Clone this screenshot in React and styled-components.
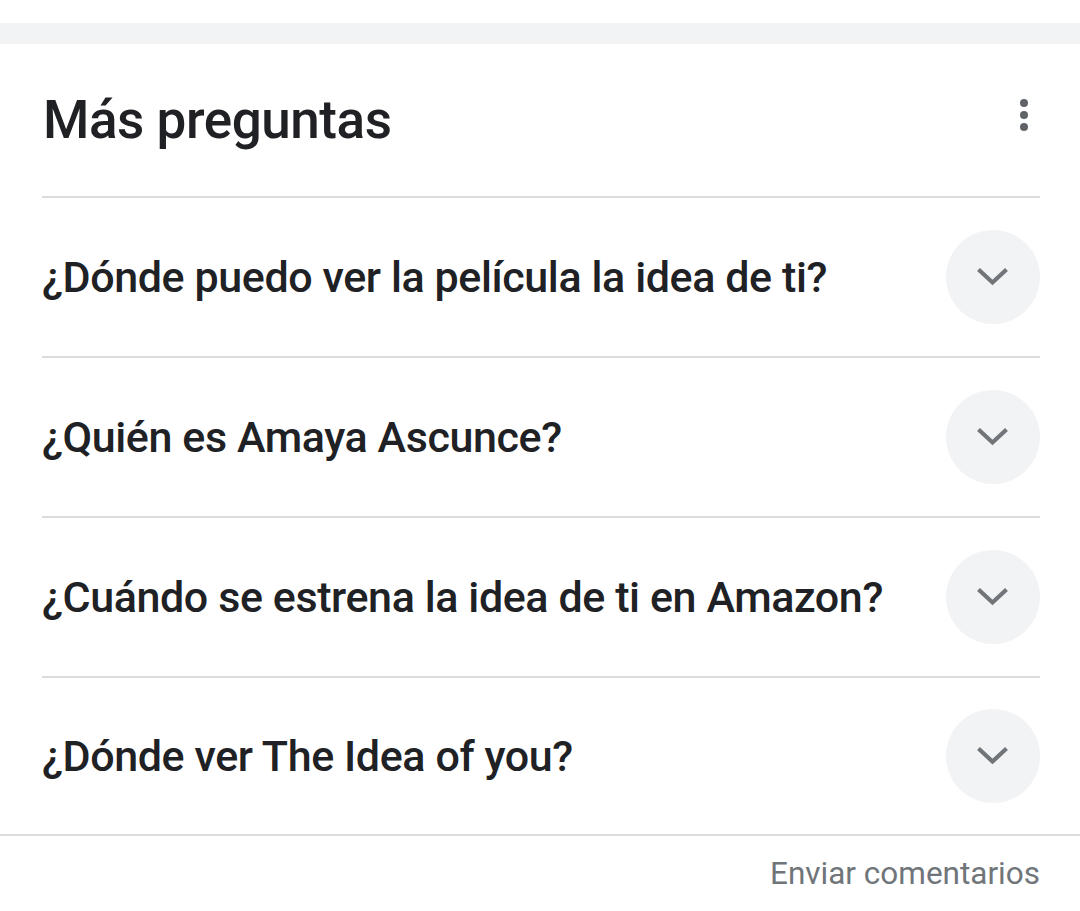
import React from "react";
import styled, { createGlobalStyle } from "styled-components";

const Global = createGlobalStyle`
  html, body { margin: 0; padding: 0; background: #fff; }
  body { font-family: Roboto, "Noto Sans", Arial, sans-serif; color: #202124; }
`;

const Page = styled.div`
  width: 1080px;
  background: #fff;
  padding-top: 23px;
`;

const Band = styled.div`
  height: 21px;
  background: #f1f3f4;
`;

const Card = styled.section`
  background: #fff;
`;

const Inner = styled.div`
  padding: 0 40px 0 42px;
`;

const Header = styled.div`
  height: 152px;
  display: flex;
  align-items: center;
  justify-content: space-between;
  border-bottom: 2px solid #dadce0;
`;

const Title = styled.h2`
  margin: 0;
  font-size: 53px;
  line-height: 62px;
  font-weight: 500;
  letter-spacing: -0.45px;
  color: #202124;
  margin-left: 1px;
`;

const IconButton = styled.button`
  width: 48px;
  height: 48px;
  border: 0;
  padding: 0;
  background: transparent;
  margin-right: -8px;
  margin-top: -10px;
  display: flex;
  align-items: center;
  justify-content: center;
`;

const Row = styled.div`
  height: ${(p) => p.$h}px;
  display: flex;
  align-items: center;
  justify-content: space-between;
  border-bottom: ${(p) => (p.$last ? "none" : "2px solid #dadce0")};
`;

const Question = styled.div`
  font-size: 43px;
  line-height: 50px;
  font-weight: 500;
  letter-spacing: -0.4px;
  color: #202124;
`;

const Circle = styled.div`
  width: 94px;
  height: 94px;
  border-radius: 50%;
  background: #f1f3f4;
  display: flex;
  align-items: center;
  justify-content: center;
  flex-shrink: 0;
`;

const Footer = styled.div`
  border-top: 2px solid #dadce0;
  height: 75px;
  display: flex;
  align-items: center;
  justify-content: flex-end;
  padding-right: 40px;
`;

const FeedbackLink = styled.span`
  font-size: 31.5px;
  line-height: 40px;
  color: #70757a;
`;

const MoreVert = () => (
  <svg width="48" height="48" viewBox="0 0 24 24" fill="#5f6368">
    <circle cx="12" cy="6" r="2" />
    <circle cx="12" cy="12" r="2" />
    <circle cx="12" cy="18" r="2" />
  </svg>
);

const Chevron = () => (
  <svg width="36" height="24" viewBox="0 0 36 24" fill="none">
    <polyline
      points="3.5,4.5 17.5,17.5 31.5,4.5"
      stroke="#70757a"
      strokeWidth="4.2"
      strokeLinecap="butt"
      strokeLinejoin="miter"
    />
  </svg>
);

const questions = [
  "¿Dónde puedo ver la película la idea de ti?",
  "¿Quién es Amaya Ascunce?",
  "¿Cuándo se estrena la idea de ti en Amazon?",
  "¿Dónde ver The Idea of you?",
];

export default function App() {
  return (
    <>
      <Global />
      <Page>
        <Band />
        <Card>
          <Inner>
            <Header>
              <Title>Más preguntas</Title>
              <IconButton aria-label="Más opciones">
                <MoreVert />
              </IconButton>
            </Header>
            {questions.map((q, i) => {
              const last = i === questions.length - 1;
              return (
                <Row key={q} $h={last ? 156 : 158} $last={last}>
                  <Question>{q}</Question>
                  <Circle>
                    <Chevron />
                  </Circle>
                </Row>
              );
            })}
          </Inner>
          <Footer>
            <FeedbackLink>Enviar comentarios</FeedbackLink>
          </Footer>
        </Card>
      </Page>
    </>
  );
}
